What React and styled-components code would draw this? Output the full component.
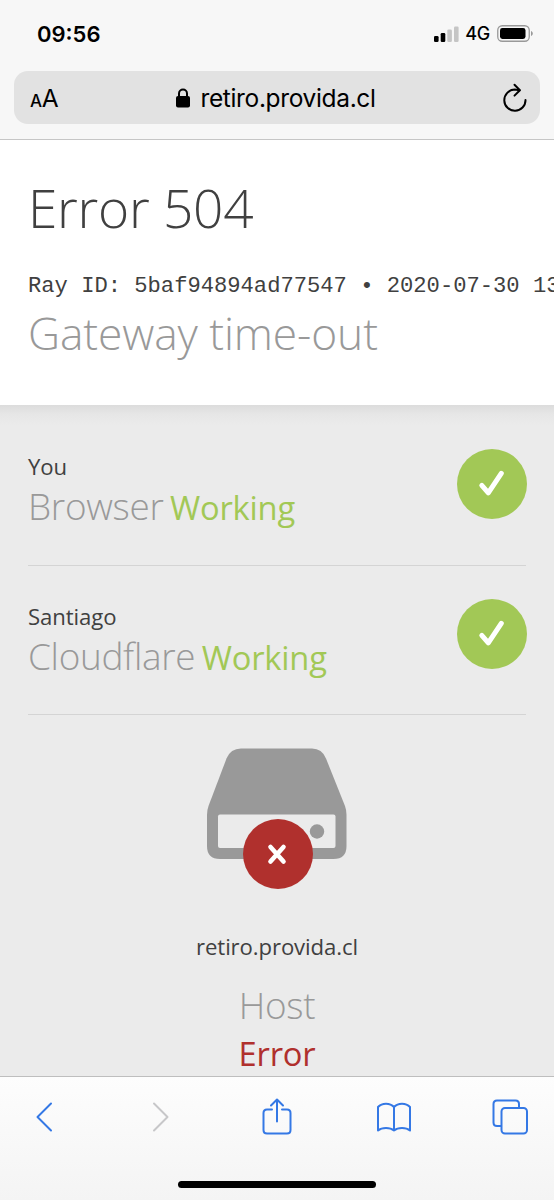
import React from "react";
import styled, { createGlobalStyle } from "styled-components";

const GlobalStyle = createGlobalStyle`
  * {
    box-sizing: border-box;
  }

  body {
    margin: 0;
    overflow: hidden;
    background: #ebebeb;
  }
`;

const Phone = styled.div`
  display: flex;
  flex-direction: column;
  width: 554px;
  height: 1200px;
  overflow: hidden;
  font-family: "Open Sans", sans-serif;
  color: #404040;
  background: #ebebeb;
`;

const BrowserTop = styled.header`
  flex: none;
  height: 140px;
  padding: 0 14px;
  background: #f7f7f7;
  border-bottom: 1px solid #c6c6c6;
  font-family: Inter, sans-serif;
  color: #000;
`;

const StatusBar = styled.div`
  display: flex;
  align-items: center;
  justify-content: space-between;
  height: 71px;
  padding: 0 7px 4px 23px;
`;

const Clock = styled.span`
  font-size: 22px;
  font-weight: 600;
`;

const Indicators = styled.div`
  display: flex;
  align-items: center;
`;

const Network = styled.span`
  margin: 0 7px 0 6px;
  font-size: 18px;
  font-weight: 500;
  letter-spacing: -0.3px;
`;

const AddressBar = styled.div`
  display: flex;
  align-items: center;
  justify-content: space-between;
  height: 53px;
  padding: 0 13px 0 16px;
  border-radius: 14px;
  background: #e2e2e2;
`;

const TextSize = styled.span`
  width: 28px;
  padding-top: 3px;
  font-size: 24.5px;
  line-height: 50px;
  letter-spacing: -0.4px;
  white-space: nowrap;

  small {
    font-size: 17px;
    font-weight: 500;
  }
`;

const Address = styled.div`
  display: flex;
  align-items: center;
  gap: 10px;
  padding-right: 8px;
  font-size: 24.5px;
  letter-spacing: -0.35px;
`;

const ErrorHeader = styled.section`
  flex: none;
  height: 265px;
  padding: 36px 0 0 28px;
  background: #fff;
  white-space: nowrap;
  overflow: hidden;
`;

const Title = styled.h1`
  margin: 0;
  font-size: 53.2px;
  line-height: 64px;
  font-weight: 300;
  letter-spacing: -0.25px;
`;

const RayId = styled.div`
  margin-top: 34px;
  font-family: "Liberation Mono", monospace;
  font-size: 22.15px;
  line-height: 26px;
`;

const Subtitle = styled.h2`
  margin: 3px 0 0;
  font-size: 44.3px;
  line-height: 60px;
  font-weight: 300;
  letter-spacing: -0.1px;
  color: #999;
`;

const StatusList = styled.main`
  flex: 1;
  min-height: 0;
  overflow: hidden;
  padding: 0 28px;
  background: linear-gradient(#dcdcdc, #e6e6e6 9px, #ebebeb 20px);
`;

const StatusRow = styled.div`
  display: flex;
  justify-content: space-between;
  height: ${props => (props.$first ? 161 : 149)}px;
  padding-top: ${props => (props.$first ? 44 : 33)}px;
  border-bottom: 1px solid #d4d4d4;
`;

const RowText = styled.div`
  padding-top: 2px;
`;

const Label = styled.div`
  font-size: 22.15px;
  line-height: 30px;
  letter-spacing: -0.1px;
`;

const Name = styled.span`
  font-size: 36.9px;
  line-height: 48px;
  font-weight: 300;
  letter-spacing: -0.3px;
  color: #999;
`;

const State = styled.span`
  font-size: 32.7px;
  line-height: 48px;
  letter-spacing: -0.2px;
  color: ${props => (props.$error ? "#b0302d" : "#a2c856")};
`;

const NameLine = styled.div`
  display: flex;
  align-items: baseline;
  gap: 6.5px;
  padding-top: 1px;
`;

const HostStatus = styled.div`
  display: flex;
  flex-direction: column;
  align-items: center;
  padding-top: 33px;

  ${Label} {
    margin: 42px 0 20px;
  }

  ${State} {
    margin-top: 1px;
  }
`;

const Toolbar = styled.footer`
  flex: none;
  height: 124px;
  border-top: 1px solid #bebebe;
  background: linear-gradient(#fdfdfd, #f4f4f4);
`;

const Actions = styled.nav`
  display: flex;
  align-items: center;
  justify-content: space-between;
  height: 80px;
  padding: 0 25px;
`;

const HomeIndicator = styled.div`
  width: 198px;
  height: 7px;
  margin: 24px auto 0;
  border-radius: 4px;
  background: #000;
`;

const ActionIcon = styled.svg.attrs({
  width: 38,
  height: 40,
  viewBox: "0 0 38 40"
})`
  fill: none;
  stroke: ${props => (props.$disabled ? "#c7c7c9" : "#3478e5")};
  stroke-width: 2;
  stroke-linecap: round;
  stroke-linejoin: round;
`;

const CheckBadge = styled.svg`
  flex: none;
  margin-right: -1px;
`;

const Signal = () => (
  <svg width="25" height="16" viewBox="0 0 25 16">
    <rect x="0" y="10" width="4.6" height="6" rx="1.3" />
    <rect x="6.7" y="7" width="4.6" height="9" rx="1.3" />
    <rect x="13.3" y="3.5" width="4.6" height="12.5" rx="1.3" fill="#c5c5c5" />
    <rect x="20" y="0.5" width="4.6" height="15.5" rx="1.3" fill="#c5c5c5" />
  </svg>
);

const Battery = () => (
  <svg width="36" height="17" viewBox="0 0 36 17">
    <rect
      x="0.75"
      y="0.75"
      width="31.5"
      height="15.5"
      rx="4.5"
      fill="none"
      stroke="#999"
      strokeWidth="1.3"
    />
    <rect x="3" y="3" width="25.5" height="11" rx="2.4" />
    <path d="M34 6c1.4.6 1.8 1.6 1.8 2.5S35.4 10.4 34 11z" fill="#999" />
  </svg>
);

const Lock = () => (
  <svg width="14" height="20" viewBox="0 0 14 20">
    <rect y="8" width="14" height="11.5" rx="2" />
    <path
      d="M3 9V5.5a4 4 0 0 1 8 0V9"
      fill="none"
      stroke="#000"
      strokeWidth="2"
    />
  </svg>
);

const Reload = () => (
  <svg
    width="25"
    height="29"
    viewBox="0 0 25 29"
    fill="none"
    stroke="#000"
    strokeWidth="2"
    strokeLinecap="round"
    strokeLinejoin="round"
  >
    <path d="M17.5 7.2L12.7 6.6A10.600 10.600 0 1 0 23.500 17" />
    <path d="M12.5 1.8l5.400 5.400-5.400 5.400" />
  </svg>
);

const Check = () => (
  <CheckBadge width="70" height="70" viewBox="0 0 70 70">
    <circle cx="35" cy="35" r="35" fill="#a2c856" />
    <path
      d="M24.8 36.300l6.500 7.500L44.3 24.300"
      fill="none"
      stroke="#fff"
      strokeWidth="5"
      strokeLinecap="round"
      strokeLinejoin="round"
    />
  </CheckBadge>
);

const Server = () => (
  <svg width="140" height="141" viewBox="0 0 140 141">
    <path
      d="M34 .5H105q10 0 14 10L138 58q1.500 4 1.500 9V98q0 13-13 13H13Q0 111 0 98V67q0-5 1.500-9L19.500 10.500Q23.500.5 34 .5Z"
      fill="#999"
    />
    <rect x="11" y="66.5" width="117.5" height="33.5" rx="2" fill="#ebebeb" />
    <circle cx="110" cy="83.5" r="7.2" fill="#999" />
    <circle cx="71" cy="106" r="35" fill="#b0302d" />
    <path
      d="M63.5 99L76.5 113.5M76.5 99L63.5 113.5"
      fill="none"
      stroke="#fff"
      strokeWidth="4.6"
      strokeLinecap="round"
    />
  </svg>
);

const Status = ({ first, label, name }) => (
  <StatusRow $first={first}>
    <RowText>
      <Label>{label}</Label>
      <NameLine>
        <Name>{name}</Name>
        <State>Working</State>
      </NameLine>
    </RowText>
    <Check />
  </StatusRow>
);

const App = () => {
  return (
    <Phone>
      <GlobalStyle />
      <BrowserTop>
        <StatusBar>
          <Clock>09:56</Clock>
          <Indicators>
            <Signal />
            <Network>4G</Network>
            <Battery />
          </Indicators>
        </StatusBar>
        <AddressBar>
          <TextSize>
            <small>A</small>A
          </TextSize>
          <Address>
            <Lock />
            <span>retiro.provida.cl</span>
          </Address>
          <Reload />
        </AddressBar>
      </BrowserTop>

      <ErrorHeader>
        <Title>Error 504</Title>
        <RayId>Ray ID: 5baf94894ad77547 • 2020-07-30 13</RayId>
        <Subtitle>Gateway time-out</Subtitle>
      </ErrorHeader>

      <StatusList>
        <Status first label="You" name="Browser" />
        <Status label="Santiago" name="Cloudflare" />
        <HostStatus>
          <Server />
          <Label>retiro.provida.cl</Label>
          <Name>Host</Name>
          <State $error>Error</State>
        </HostStatus>
      </StatusList>

      <Toolbar>
        <Actions>
          <ActionIcon>
            <path d="M26 6.5L12.5 20L26 33.5" />
          </ActionIcon>
          <ActionIcon $disabled>
            <path d="M12 6.5L25.5 20L12 33.5" />
          </ActionIcon>
          <ActionIcon>
            <path d="M14 12.5H9q-3.500 0-3.500 3.500V33Q5.500 36.500 9 36.500H29q3.500 0 3.500-3.500V16Q32.500 12.500 29 12.500H24M19 24.500V2.500M13 8.500l6-6 6 6" />
          </ActionIcon>
          <ActionIcon>
            <path d="M19 10C15 5.500 7 5.500 3 10V33.500c4-3.500 12-3.500 16 0c4-3.500 12-3.500 16 0V10C31 5.500 23 5.500 19 10V33.500" />
          </ActionIcon>
          <ActionIcon>
            <path d="M28 10.500V7Q28 3.500 24.500 3.500H6Q2.500 3.500 2.500 7V25.500Q2.500 29 6 29H10" />
            <rect x="10.5" y="11" width="25.5" height="25.5" rx="3.5" />
          </ActionIcon>
        </Actions>
        <HomeIndicator />
      </Toolbar>
    </Phone>
  );
};

export default App;
